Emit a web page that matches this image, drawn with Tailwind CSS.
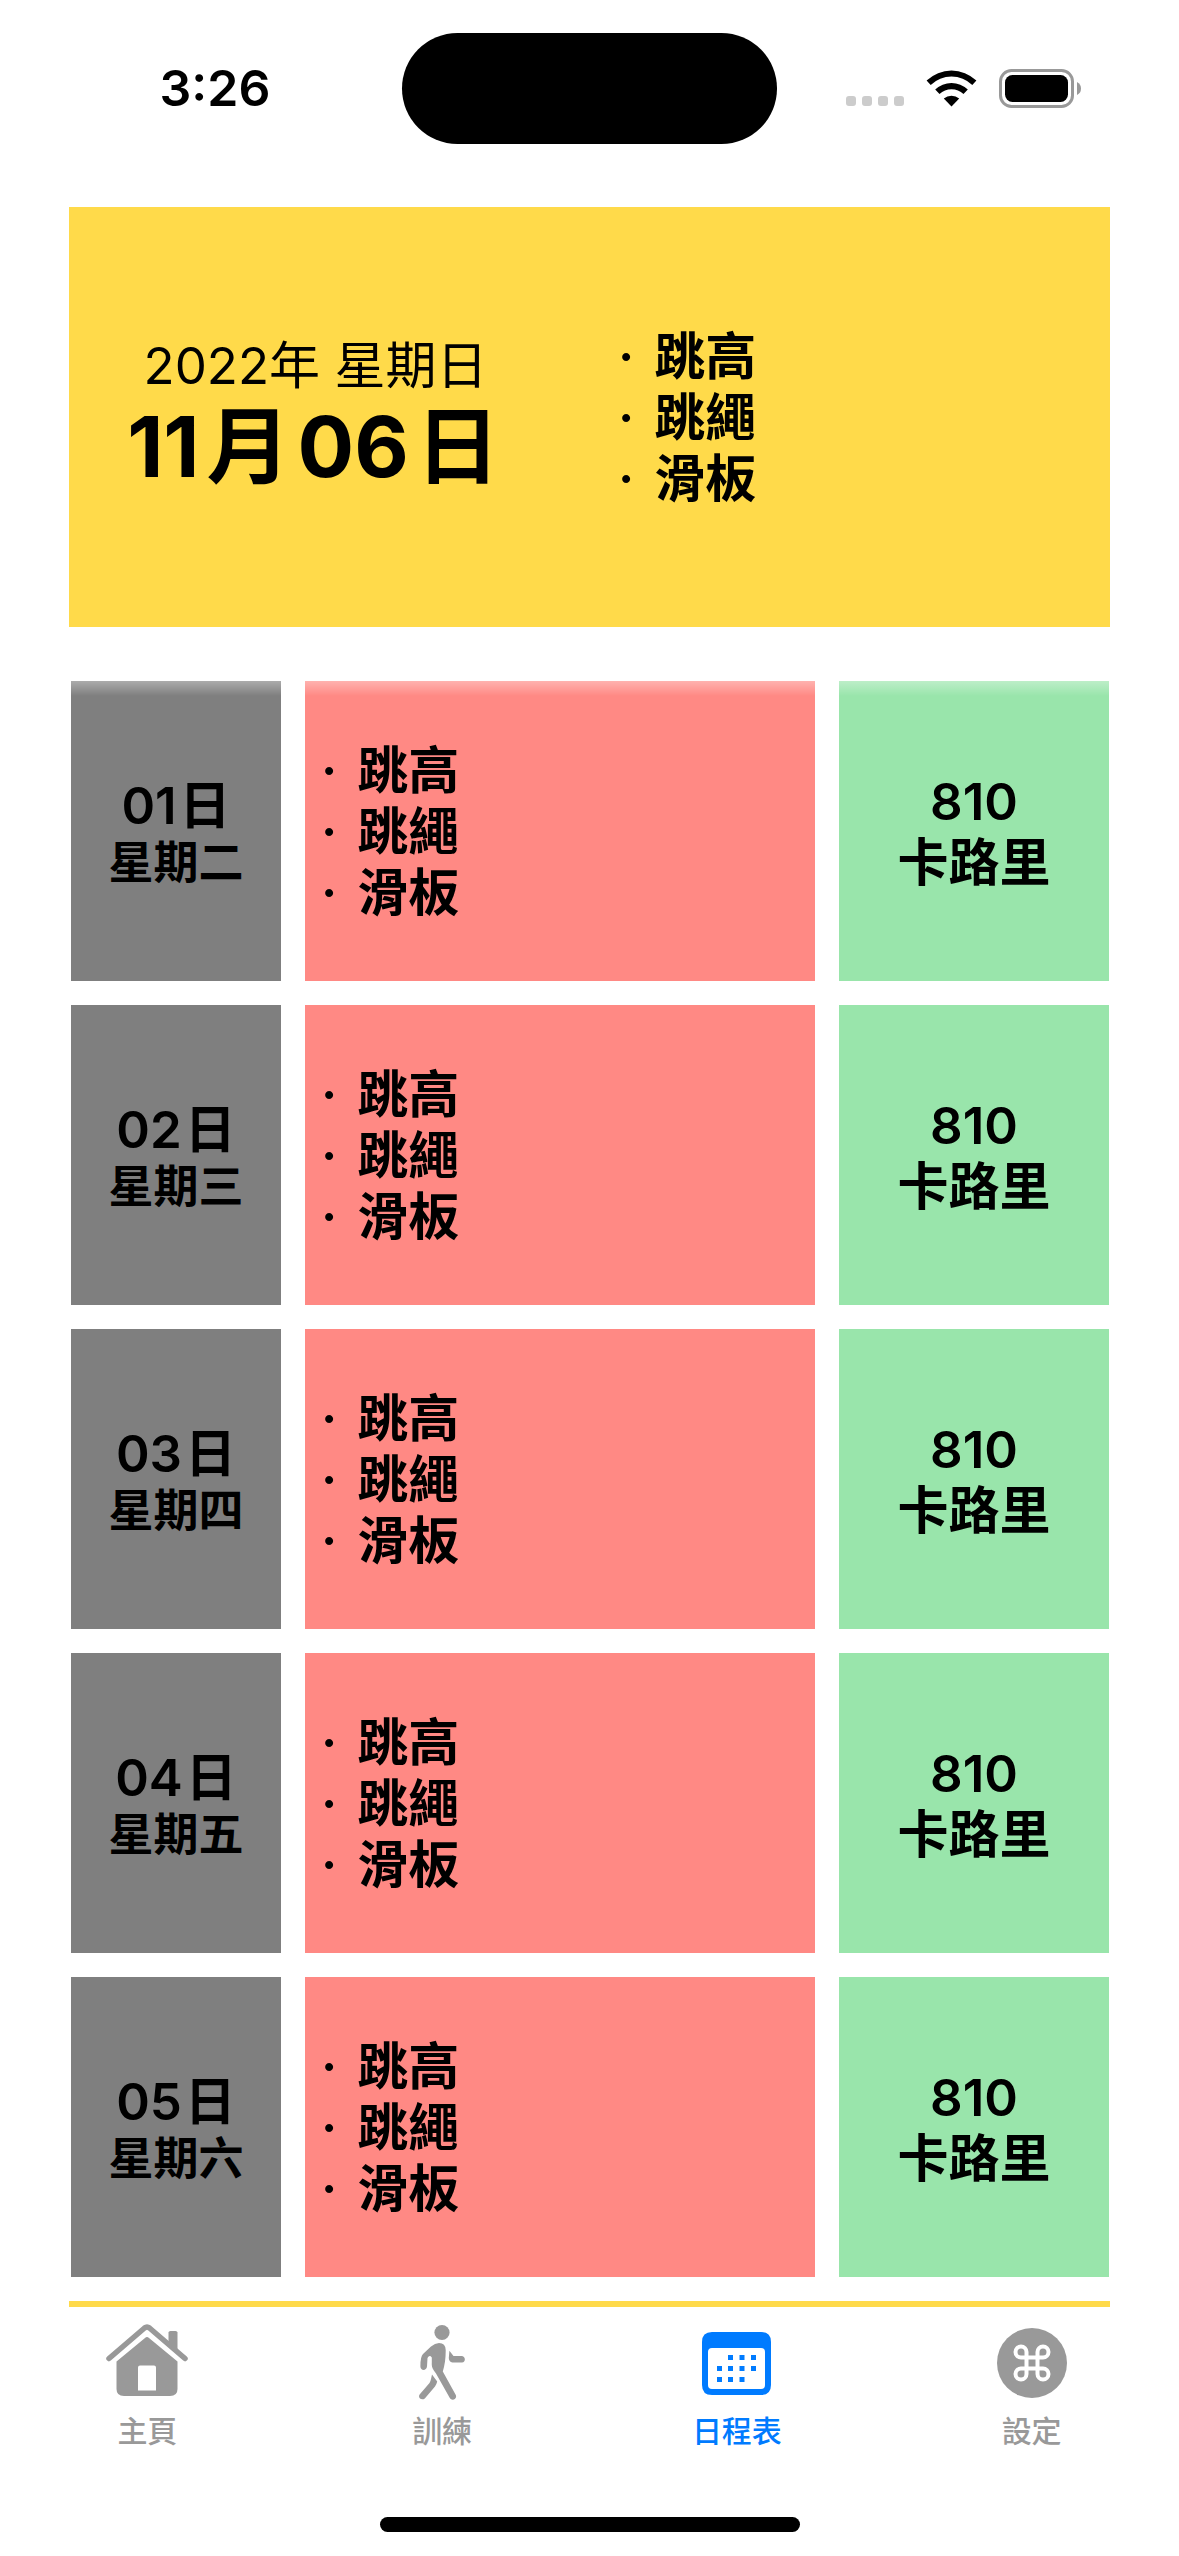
<!DOCTYPE html>
<html lang="zh-Hant">
<head>
<meta charset="utf-8">
<meta name="viewport" content="width=device-width, initial-scale=1">
<title>日程表</title>
<script src="https://cdn.jsdelivr.net/npm/@tailwindcss/browser@4"></script>
</head>
<body class="bg-white text-black font-['Inter','Noto_Sans_CJK_TC',sans-serif]">
<div class="flex min-h-screen flex-col">

  <!-- Status bar -->
  <header class="grid h-[207px] grid-cols-[1fr_375px_1fr] pt-[33px]">
    <div class="flex h-[110px] items-center justify-center pl-7">
      <time class="text-[50px] leading-[60px] font-semibold">3:26</time>
    </div>
    <div class="h-[111px] rounded-full bg-black"></div>
    <div class="flex h-[110px] items-center justify-end gap-[22px] pr-[98px]">
      <svg class="h-[38px] w-[58px]" viewBox="0 0 58 38" fill="#cccccc" aria-hidden="true">
        <rect x="0" y="27" width="10" height="10" rx="3"/><rect x="16" y="27" width="10" height="10" rx="3"/><rect x="32" y="27" width="10" height="10" rx="3"/><rect x="48" y="27" width="10" height="10" rx="3"/>
      </svg>
      <svg class="h-[38px] w-[51px]" viewBox="0 0 51 38" aria-hidden="true">
        <path d="M0.6 11.6A36 36 0 0 1 50.4 11.6L46.3 16A30 30 0 0 0 4.7 16Z"/>
        <path d="M9.2 20.5A23.5 23.5 0 0 1 41.8 20.5L37.5 25A17.5 17.5 0 0 0 13.5 25Z"/>
        <path d="M17.8 29.6A11.6 11.6 0 0 1 33.2 29.6L25.5 37.6Z"/>
      </svg>
      <svg class="h-[39px] w-[82px]" viewBox="0 0 82 39" aria-hidden="true">
        <rect x="1.5" y="1.5" width="72" height="36" rx="11" fill="none" stroke="#999999" stroke-width="3"/>
        <rect x="6" y="6" width="63" height="27" rx="7.5"/>
        <path d="M78 13Q82 15 82 19.5T78 26Z" fill="#999999"/>
      </svg>
    </div>
  </header>

  <main class="flex flex-col px-[69px]">
    <!-- Today -->
    <section class="flex h-[420px] items-center bg-[#ffda4a]">
      <div class="w-[489px] text-center">
        <p class="pl-1 text-[51px] leading-[60px]">2022年 星期日</p>
        <h1 class="flex justify-center gap-[7px] text-[84px] leading-[102px] font-bold"><span>11</span><span>月</span><span>06</span><span>日</span></h1>
      </div>
      <ul class="pl-[60px] text-[51px] leading-[61px] font-semibold">
        <li class="flex gap-5"><span>·</span>跳高</li>
        <li class="flex gap-5"><span>·</span>跳繩</li>
        <li class="flex gap-5"><span>·</span>滑板</li>
      </ul>
    </section>

    <!-- Month schedule -->
    <section class="relative mt-[54px] mr-[1px] ml-[2px] flex flex-col gap-6" id="days">
      <div class="pointer-events-none absolute inset-x-0 top-0 h-[15px] bg-linear-to-b from-white/35 to-white/0"></div>
    </section>
    <div class="mt-6 h-[6px] bg-[#ffda4a]"></div>
  </main>

  <!-- Tab bar -->
  <nav class="grid grid-cols-4 pt-4 text-[30px] leading-9 font-medium text-[#999999]">
    <a href="#home" class="flex flex-col items-center gap-3">
      <svg class="h-[78px] w-[82px]" viewBox="0 0 82 78" aria-hidden="true">
        <path d="M3 35.500L38.500 5Q41 3 43.500 5L79 35.500" fill="none" stroke="currentColor" stroke-width="5.500" stroke-linecap="round"/>
        <path d="M62.500 19V9.500Q62.500 8 64.500 8H69.500Q71.500 8 71.500 9.500V28Z" fill="currentColor"/>
        <path fill-rule="evenodd" d="M10.500 38.500L39 15Q41 13 43 15L71.500 38.500V66Q71.500 73 64 73H18Q10.500 73 10.500 66ZM34 42.500Q32 42.500 32 44.500V67.500H50V44.500Q50 42.500 48 42.500Z" fill="currentColor"/>
      </svg>
      <span>主頁</span>
    </a>
    <a href="#training" class="flex flex-col items-center gap-3">
      <svg class="h-[78px] w-[46px]" viewBox="0 0 46 78" fill="currentColor" aria-hidden="true">
        <circle cx="23" cy="9.500" r="7.600"/>
        <path d="M12 23.500Q16 20 20 20Q26.500 20 26.700 27C26.800 35 25.800 42 23.800 48.500L36.800 72C38.500 76 33 78.500 30.800 75L17 50.500C13.500 46 12.500 44 12.800 40V34.500Q10.500 31.500 8.500 35L8 43.500C7.500 48 1.500 48 1.400 43.500Q1.300 34 4 31Z"/>
        <path d="M30.400 27.800L34.500 33H43C46.800 33.500 46.800 39.200 43 39.600H33.500Q29.800 38.500 29.800 35Z"/>
        <path d="M13 51.500L18.200 58.500Q17.500 61.500 16 63.500L5.800 75.500C2.500 78 -1.500 74.500 0.600 71.500L10.500 60Q11.700 58 12 56Z"/>
      </svg>
      <span>訓練</span>
    </a>
    <a href="#schedule" aria-current="page" class="flex flex-col items-center gap-3 text-[#007bff]">
      <svg class="h-[78px] w-[69px]" viewBox="0 0 69 78" fill="currentColor" aria-hidden="true">
        <path fill-rule="evenodd" d="M10 9H59Q69 9 69 19V62Q69 72 59 72H10Q0 72 0 62V19Q0 9 10 9ZM10 25Q6 25 6 29V62Q6 66 10 66H59Q63 66 63 62V29Q63 25 59 25Z"/>
        <path d="M26 32h5v5h-5zM37.500 32h5v5h-5zM49 32h5v5h-5zM15 43h5v5h-5zM26 43h5v5h-5zM37.500 43h5v5h-5zM49 43h5v5h-5zM15 54h5v5h-5zM26 54h5v5h-5zM37.500 54h5v5h-5z"/>
      </svg>
      <span>日程表</span>
    </a>
    <a href="#settings" class="flex flex-col items-center gap-3">
      <svg class="h-[78px] w-[70px]" viewBox="0 0 70 78" aria-hidden="true">
        <circle cx="35" cy="40" r="35" fill="currentColor"/>
        <path d="M29.500 34.500H24A5.500 5.500 0 1 1 29.500 29V51A5.500 5.500 0 1 1 24 45.500H46A5.500 5.500 0 1 1 40.500 51V29A5.500 5.500 0 1 1 46 34.500Z" fill="none" stroke="#fff" stroke-width="4"/>
      </svg>
      <span>設定</span>
    </a>
  </nav>

  <!-- Home indicator -->
  <div class="mt-auto flex justify-center pb-6">
    <div class="h-[15px] w-[420px] rounded-full bg-black"></div>
  </div>
</div>

<template id="day-row">
  <article class="grid min-h-[300px] grid-cols-[210fr_510fr_270fr] gap-6 font-semibold">
    <div class="flex flex-col justify-center bg-[#7f7f7f] pt-1 text-center">
      <h2 class="flex justify-center gap-[3px] text-[51px] leading-[60px]"><span data-day></span><span>日</span></h2>
      <p class="text-[45px] leading-[54px]" data-weekday></p>
    </div>
    <ul class="flex flex-col justify-center bg-[#ff8984] pl-4 text-[51px] leading-[61px]">
      <li class="flex gap-5"><span>·</span>跳高</li>
      <li class="flex gap-5"><span>·</span>跳繩</li>
      <li class="flex gap-5"><span>·</span>滑板</li>
    </ul>
    <div class="flex flex-col justify-center bg-[#99e5ab] pt-[2px] text-center text-[51px] leading-[61px]">
      <p>810</p>
      <p>卡路里</p>
    </div>
  </article>
</template>
<script>
  const list = document.getElementById('days');
  const template = document.getElementById('day-row');
  ['二', '三', '四', '五', '六'].forEach((weekday, i) => {
    const row = template.content.cloneNode(true);
    row.querySelector('[data-day]').textContent = `0${i + 1}`;
    row.querySelector('[data-weekday]').textContent = `星期${weekday}`;
    list.insertBefore(row, list.lastElementChild);
  });
</script>
</body>
</html>
